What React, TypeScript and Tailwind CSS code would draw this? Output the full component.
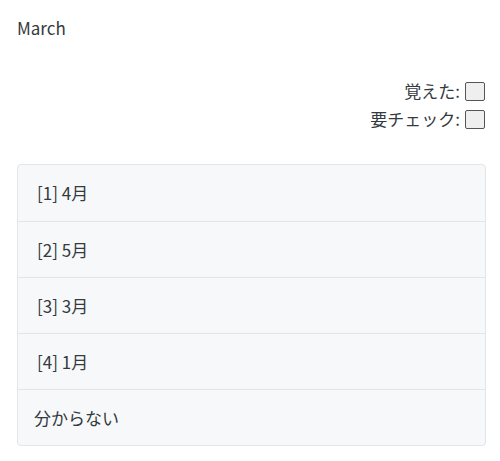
const options = ["[1] 4月", "[2] 5月", "[3] 3月", "[4] 1月", "分からない"]

export default function App() {
  return (
    <div
      className="pl-[17px] pr-[14px] pt-[16px] pb-4 text-[17px] text-[#343a40]"
      style={{ fontFamily: '"Noto Sans CJK JP", "Noto Sans", sans-serif' }}
    >
      <div className="leading-6">March</div>

      <div className="mt-[41px] flex flex-col items-end gap-[8px] pr-[1px]">
        <label className="flex items-center gap-[5px] leading-5">
          <span>覚えた:</span>
          <span className="h-[19px] w-[20px] rounded-[2px] border border-[#555] bg-[#efefef]" />
        </label>
        <label className="flex items-center gap-[5px] leading-5">
          <span>要チェック:</span>
          <span className="h-[19px] w-[20px] rounded-[2px] border border-[#555] bg-[#efefef]" />
        </label>
      </div>

      <div className="mt-[35px] rounded-[4px] border border-[#e3e5e8] bg-[#f7f8fa]">
        {options.map((o, i) => (
          <div
            key={i}
            className={`flex h-[56px] items-center px-[16px] ${i > 0 ? "border-t border-[#e3e5e8]" : ""}`}
          >
            <span className={o.startsWith("[") ? "pl-[3px]" : ""}>{o}</span>
          </div>
        ))}
      </div>
    </div>
  )
}
